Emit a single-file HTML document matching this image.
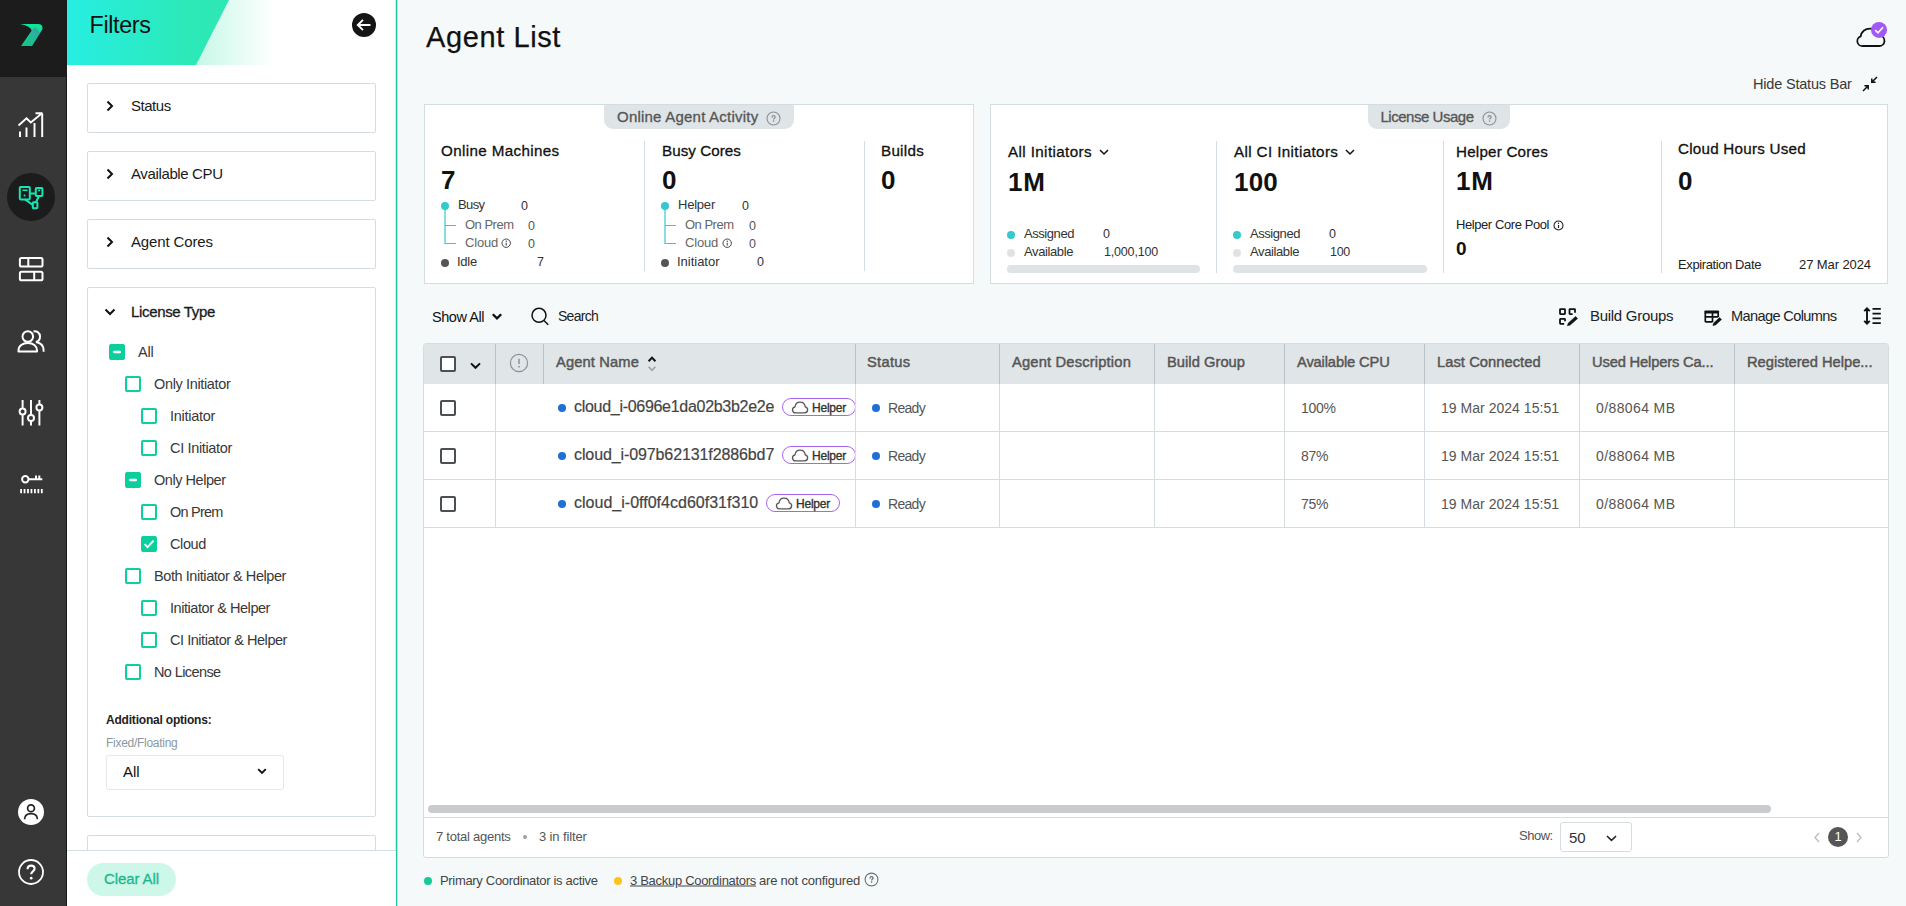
<!DOCTYPE html>
<html lang="en">
<head>
<meta charset="utf-8">
<title>Agent List</title>
<style>
*{box-sizing:border-box;margin:0;padding:0}
html,body{width:1906px;height:906px;overflow:hidden}
body{position:relative;background:#f5f9fa;font-family:"Liberation Sans",sans-serif;color:#1a1a1a;font-size:14px}
.abs,.t,.ico{position:absolute}
.t{white-space:nowrap;line-height:1;transform:translateY(-50%)}
.m{-webkit-text-stroke:0.3px currentColor}
.b{font-weight:bold}
.g{color:#555}
.g2{color:#666}
svg{display:block;overflow:visible}

/* sidebar */
#nav{position:absolute;left:0;top:0;width:67px;height:906px;background:#373737;box-shadow:inset -1px 0 0 #161616}
#nav .logo{position:absolute;left:0;top:0;width:67px;height:77px;background:#1c1c1c}
#nav .active{position:absolute;left:7px;top:173px;width:48px;height:48px;border-radius:50%;background:#1c1c1c}

/* filters */
#filters{position:absolute;left:67px;top:0;width:331px;height:906px;background:#fff;box-shadow:inset -1px 0 0 #b4ebdc, inset -2px 0 0 #1ec9a1, inset -3px 0 0 #c3f0e3}
#fhead{position:absolute;left:0;top:0;width:329px;height:65px;overflow:hidden}
.fbox{position:absolute;left:20px;width:289px;border:1px solid #d3dde2;border-radius:2px;background:#fff}
#ffoot{position:absolute;left:0;top:850px;width:329px;height:56px;background:#fff;border-top:1px solid #d3dde2}
#clear{position:absolute;left:20px;top:12px;width:89px;height:33px;border-radius:17px;background:#ccf7e9}
.cb{position:absolute;width:16px;height:16px;border:2px solid #0ccf9e;border-radius:2px;background:#fff}
.cb.on{background:#0ccf9e}
.sel{position:absolute;border:1px solid #e3e8eb;border-radius:3px;background:#fff}

/* main */
.card{position:absolute;top:104px;height:180px;background:#fff;border:1px solid #d3dce1}
.tab{position:absolute;top:0;height:24px;background:#dfe4e7;border-radius:0 0 9px 9px}
.vd{position:absolute;width:1px;background:#d3dce1}
.dot{position:absolute;width:8px;height:8px;border-radius:50%}
.bar{position:absolute;height:8px;border-radius:4px;background:#dfe3e6}
#tbl{position:absolute;left:423px;top:343px;width:1466px;height:515px;background:#fff;border:1px solid #d5dde1;border-radius:3px}
#thead{position:absolute;left:0;top:0;width:1464px;height:40px;background:#e0e5e8;border-radius:2px 2px 0 0}
.hl{position:absolute;top:0;width:1px;height:40px;background:#b9c2c7}
.cl{position:absolute;top:40px;width:1px;height:144px;background:#d5dde1}
.rl{position:absolute;left:0;width:1464px;height:1px;background:#d5dde1}
.ck{position:absolute;width:16px;height:16px;border:2px solid #4b5054;border-radius:2px;background:#fff}
.badge{position:absolute;height:18px;width:74px;border:1px solid #a764f0;border-radius:9px;background:#fff}
.bclip{position:absolute;height:20px;overflow:hidden}
</style>
</head>
<body>

<!-- ============ NAV ============ -->
<nav>
  <div id="nav"><div class="logo"></div><div class="active"></div></div>
  <!-- logo -->
  <svg class="ico" style="left:18px;top:22px" width="28" height="26" viewBox="18 22 28 26">
    <defs><linearGradient id="lg" x1="0" y1="0" x2="0" y2="1"><stop offset="0" stop-color="#0fe796"/><stop offset="1" stop-color="#17c08c"/></linearGradient>
    <linearGradient id="lg2" x1="0.7" y1="0" x2="0.2" y2="1"><stop offset="0" stop-color="#4a86b0"/><stop offset="1" stop-color="#1fb893" stop-opacity="0.2"/></linearGradient></defs>
    <path d="M20 24 L38.5 24 Q43.5 24.3 42.3 29.5 L32 46 L21 46 L31.8 30.5 Q30 25.5 20 24 Z" fill="url(#lg)"/>
    <path d="M31.8 30.5 L35.5 27 L40 33 L32 46 L25 46 Z" fill="url(#lg2)" opacity="0.75"/>
  </svg>
  <!-- chart -->
  <svg class="ico" style="left:17px;top:110px" width="28" height="28" viewBox="17 110 28 28" fill="none" stroke="#fff" stroke-width="1.95">
    <path d="M20 131.5V137M26.5 127.5V137M34.5 123V137M42.2 113.5V137"/>
    <path d="M18.5 125.5L26.5 118.3L30.8 122.5L42 113.2M35.5 113.2H42.5"/>
  </svg>
  <!-- agents (active) -->
  <svg class="ico" style="left:18px;top:185px" width="26" height="25" viewBox="18 185 26 25" fill="none" stroke="#14e6b4" stroke-width="2">
    <rect x="19.8" y="187" width="10" height="12.4" rx="0.8"/>
    <rect x="35.8" y="188" width="6.6" height="8" rx="0.8"/>
    <rect x="32.8" y="202.2" width="4.6" height="6" rx="0.8"/>
    <path d="M30 193.5H35.8M25 199.4L32.8 205M39 196L36 202.2"/>
    <path d="M22.5 190.3H27.5M38 190.5H40" stroke-width="1.4"/>
    <rect x="23.7" y="194.6" width="1.8" height="1.8" fill="#14e6b4" stroke="none"/>
  </svg>
  <!-- grid -->
  <svg class="ico" style="left:18px;top:256px" width="26" height="26" viewBox="18 256 26 26" fill="none" stroke="#fff" stroke-width="2">
    <rect x="19.9" y="257.9" width="22.6" height="8.6" rx="1.6"/><path d="M28.3 258V266.5"/>
    <rect x="19.9" y="271.7" width="22.6" height="8.6" rx="1.6"/><path d="M34.2 271.7V280.3"/>
  </svg>
  <!-- users -->
  <svg class="ico" style="left:16px;top:328px" width="30" height="26" viewBox="16 328 30 26" fill="none" stroke="#fff" stroke-width="2">
    <circle cx="27.8" cy="336.5" r="5.3"/>
    <path d="M18.5 351.5V350.5C18.5 346 22.5 343 27.8 343S37 346 37 350.5V351.5Z" stroke-linejoin="round"/>
    <path d="M33.5 331.4C37 330.8 40 333 40 336.5C40 339.5 38.2 341.5 36 342C40.5 342.8 43.6 346 43.6 350.5V351.8"/>
  </svg>
  <!-- sliders -->
  <svg class="ico" style="left:18px;top:399px" width="26" height="28" viewBox="18 399 26 28" fill="none" stroke="#fff" stroke-width="1.95">
    <path d="M22.6 400V408.5M22.6 414.5V425.5M31 400V415M31 421V425.5M39.4 400V404.5M39.4 410.5V425.5"/>
    <circle cx="22.6" cy="411.5" r="3"/><circle cx="31" cy="418" r="3"/><circle cx="39.4" cy="407.5" r="3"/>
  </svg>
  <!-- key -->
  <svg class="ico" style="left:19px;top:473px" width="25" height="22" viewBox="19 473 25 22" fill="none" stroke="#fff" stroke-width="2">
    <circle cx="25.3" cy="479.2" r="3.2"/><path d="M28.5 479.2H42.3M36 479.2V475.5M39.3 479.2V475.5"/>
    <path d="M20.2 491.2H42.8" stroke-width="4.2" stroke-dasharray="1.8 1.65"/>
  </svg>
  <!-- avatar -->
  <svg class="ico" style="left:18px;top:799px" width="26" height="26" viewBox="18 799 26 26">
    <circle cx="31" cy="812" r="13" fill="#fff"/>
    <circle cx="31" cy="808.2" r="3.4" fill="none" stroke="#222" stroke-width="1.7"/>
    <path d="M24.6 819.3C24.6 815.5 27.4 813.6 31 813.6S37.4 815.5 37.4 819.3" fill="none" stroke="#222" stroke-width="1.7"/>
  </svg>
  <!-- help -->
  <svg class="ico" style="left:18px;top:859px" width="26" height="26" viewBox="18 859 26 26" fill="none" stroke="#fff">
    <circle cx="31" cy="872" r="12" stroke-width="1.8"/>
    <path d="M27.6 869.2C27.6 866.8 29.2 865.6 31.1 865.6C33.1 865.6 34.6 866.8 34.6 868.7C34.6 871.3 31.2 871.3 31.2 874.3" stroke-width="2.1"/>
    <circle cx="31.2" cy="878.2" r="1.35" fill="#fff" stroke="none"/>
  </svg>
</nav>

<!-- ============ FILTERS ============ -->
<aside>
  <div id="filters">
    <div id="fhead">
      <svg width="329" height="65" viewBox="0 0 329 65">
        <defs>
          <linearGradient id="g1" x1="0" y1="0" x2="1" y2="0"><stop offset="0" stop-color="#27eee3"/><stop offset="0.72" stop-color="#2ce9b8"/><stop offset="1" stop-color="#2ee7b3"/></linearGradient>
          <linearGradient id="g2" x1="0" y1="0" x2="1" y2="0"><stop offset="0" stop-color="#c3f7e6"/><stop offset="1" stop-color="#ffffff"/></linearGradient>
        </defs>
        <rect x="125" y="0" width="82" height="65" fill="url(#g2)"/>
        <polygon points="0,0 162,0 129,65 0,65" fill="url(#g1)"/>
      </svg>
    </div>
    <div class="fbox" style="top:83px;height:50px"></div>
    <div class="fbox" style="top:151px;height:50px"></div>
    <div class="fbox" style="top:219px;height:50px"></div>
    <div class="fbox" style="top:287px;height:530px"></div>
    <div class="fbox" style="top:835px;height:50px"></div>
    <div id="ffoot"><div id="clear"></div></div>
  </div>
  <h2 class="t" style="left:89.5px;top:25.5px;font-size:23.3px;font-weight:normal;color:#111;--w:61;letter-spacing:-0.346px">Filters</h2>
  <svg class="ico" style="left:352px;top:13px" width="24" height="24" viewBox="0 0 24 24"><circle cx="12" cy="12" r="12" fill="#151515"/><path d="M18.5 12H6.2M11 6.8L5.8 12L11 17.2" fill="none" stroke="#fff" stroke-width="1.9"/></svg>
  <svg class="ico" style="left:106px;top:100px" width="8" height="12" viewBox="0 0 8 12" fill="none" stroke="#111" stroke-width="2"><path d="M1.5 1.5L6 6L1.5 10.5"/></svg>
  <span class="t" style="left:131px;top:105.1px;font-size:15px;--w:39.7;letter-spacing:-0.472px">Status</span>
  <svg class="ico" style="left:106px;top:168px" width="8" height="12" viewBox="0 0 8 12" fill="none" stroke="#111" stroke-width="2"><path d="M1.5 1.5L6 6L1.5 10.5"/></svg>
  <span class="t" style="left:131px;top:173.1px;font-size:15px;--w:91.7;letter-spacing:-0.366px">Available CPU</span>
  <svg class="ico" style="left:106px;top:236px" width="8" height="12" viewBox="0 0 8 12" fill="none" stroke="#111" stroke-width="2"><path d="M1.5 1.5L6 6L1.5 10.5"/></svg>
  <span class="t" style="left:131px;top:241.1px;font-size:15px;--w:81.8;letter-spacing:-0.145px">Agent Cores</span>
  <svg class="ico" style="left:104px;top:308px" width="12" height="8" viewBox="0 0 12 8" fill="none" stroke="#111" stroke-width="2"><path d="M1.5 1.5L6 6L10.5 1.5"/></svg>
  <span class="t m" style="left:131px;top:311.1px;font-size:15px;--w:84;letter-spacing:-0.344px">License Type</span>
  <span class="cb on" style="left:109px;top:344px"><svg width="12" height="12" viewBox="0 0 12 12"><path d="M3.2 6H8.8" stroke="#fff" stroke-width="2.5" stroke-linecap="round"/></svg></span>
  <span class="t" style="left:138px;top:352px;font-size:14.5px;color:#383838;--w:15.4;letter-spacing:-0.242px">All</span>
  <span class="cb" style="left:125px;top:376px"></span>
  <span class="t" style="left:154px;top:384px;font-size:14.5px;color:#383838;--w:76.4;letter-spacing:-0.358px">Only Initiator</span>
  <span class="cb" style="left:141px;top:408px"></span>
  <span class="t" style="left:170px;top:416px;font-size:14.5px;color:#383838;--w:45;letter-spacing:-0.285px">Initiator</span>
  <span class="cb" style="left:141px;top:440px"></span>
  <span class="t" style="left:170px;top:448px;font-size:14.5px;color:#383838;--w:62;letter-spacing:-0.341px">CI Initiator</span>
  <span class="cb on" style="left:125px;top:472px"><svg width="12" height="12" viewBox="0 0 12 12"><path d="M3.2 6H8.8" stroke="#fff" stroke-width="2.5" stroke-linecap="round"/></svg></span>
  <span class="t" style="left:154px;top:480px;font-size:14.5px;color:#383838;--w:71.5;letter-spacing:-0.460px">Only Helper</span>
  <span class="cb" style="left:141px;top:504px"></span>
  <span class="t" style="left:170px;top:512px;font-size:14.5px;color:#383838;--w:52.5;letter-spacing:-0.788px">On Prem</span>
  <span class="cb on" style="left:141px;top:536px"><svg width="12" height="12" viewBox="0 0 12 12"><path d="M1.6 6.2L4.6 9.2L10.6 2.6" stroke="#fff" stroke-width="1.9" fill="none"/></svg></span>
  <span class="t" style="left:170px;top:544px;font-size:14.5px;color:#383838;--w:36;letter-spacing:-0.378px">Cloud</span>
  <span class="cb" style="left:125px;top:568px"></span>
  <span class="t" style="left:154px;top:576px;font-size:14.5px;color:#383838;--w:132;letter-spacing:-0.429px">Both Initiator &amp; Helper</span>
  <span class="cb" style="left:141px;top:600px"></span>
  <span class="t" style="left:170px;top:608px;font-size:14.5px;color:#383838;--w:100;letter-spacing:-0.444px">Initiator &amp; Helper</span>
  <span class="cb" style="left:141px;top:632px"></span>
  <span class="t" style="left:170px;top:640px;font-size:14.5px;color:#383838;--w:117;letter-spacing:-0.454px">CI Initiator &amp; Helper</span>
  <span class="cb" style="left:125px;top:664px"></span>
  <span class="t" style="left:154px;top:672px;font-size:14.5px;color:#383838;--w:66.5;letter-spacing:-0.605px">No License</span>
  <span class="t b" style="left:106px;top:720px;font-size:12px;color:#222;--w:105.5;letter-spacing:-0.201px">Additional options:</span>
  <span class="t" style="left:106px;top:743px;font-size:12px;color:#8a9aa2;--w:71.5;letter-spacing:-0.277px">Fixed/Floating</span>
  <div class="sel" style="left:106px;top:755px;width:178px;height:35px"></div>
  <span class="t" style="left:123px;top:771px;font-size:15px;color:#111;--w:16.5;letter-spacing:-0.057px">All</span>
  <svg class="ico" style="left:257px;top:768px" width="10" height="7" viewBox="0 0 10 7" fill="none" stroke="#111" stroke-width="1.9"><path d="M1.2 1.2L5 5L8.8 1.2"/></svg>
  <span class="t m" style="left:104px;top:878.2px;font-size:15px;color:#1bb88f;--w:55;letter-spacing:-0.095px">Clear All</span>
</aside>

<!-- ============ MAIN ============ -->
<main>
<h1 class="t " style="left:426px;top:37px;font-size:29px;color:#111;font-weight:normal;-webkit-text-stroke:0.25px #111;--w:135;letter-spacing:0.602px">Agent List</h1>
<svg class="ico" style="left:1855px;top:20px" width="34" height="30" viewBox="1855 20 34 30"><path d="M1862.9 46H1879.3A5.2 5.2 0 0 0 1880.3 35.7C1879.5 31.5 1875 28.6 1870 28.6C1865 28.6 1861.3 31.8 1860.7 36.3A5 5 0 0 0 1862.9 46Z" fill="none" stroke="#111" stroke-width="1.8" stroke-linejoin="round"/><circle cx="1879" cy="29.9" r="8" fill="#a259f7"/><path d="M1875.2 30.1L1878 32.8L1883 27.2" fill="none" stroke="#fff" stroke-width="1.6"/></svg>
<span class="t " style="left:1753px;top:84px;font-size:14.5px;color:#383838;--w:98.7;letter-spacing:-0.191px">Hide Status Bar</span>
<svg class="ico" style="left:1862px;top:76px" width="16" height="16" viewBox="0 0 16 16" fill="none" stroke="#111" stroke-width="1.5"><path d="M15 1L9.8 6.2M9.8 2.4V6.2H13.6M1 15L6.2 9.8M6.2 13.6V9.8H2.4"/></svg>
<section><div class="card" style="left:424px;width:550px"><div class="tab" style="left:179px;width:190px"></div><div class="vd" style="left:219px;top:36px;height:130px"></div><div class="vd" style="left:439px;top:36px;height:130px"></div></div>
<span class="t m" style="left:617px;top:116.2px;font-size:15px;color:#555;--w:141.4;letter-spacing:0.221px">Online Agent Activity</span>
<svg class="ico" style="left:765.5px;top:110.5px" width="15.0" height="15.0" viewBox="-7.5 -7.5 15.0 15.0" fill="none" stroke="#8a9197" stroke-width="1.1"><circle r="6.5"/><path d="M-1.5 -1.1C-1.5 -2.2 -0.8 -2.8 0.1 -2.8S1.6 -2.2 1.6 -1.4C1.6 -0.2 0.1 -0.3 0.1 0.9" stroke-width="1.3"/><circle cx="0.1" cy="2.6" r="0.8" fill="#8a9197" stroke="none"/></svg>
<span class="t m" style="left:441px;top:151px;font-size:15.2px;color:#111;--w:118.5;letter-spacing:0.358px">Online Machines</span>
<span class="t b" style="left:441px;top:179.7px;font-size:26px;color:#111;--w:13.5;letter-spacing:-0.969px">7</span>
<svg class="ico" style="left:440px;top:201px" width="16" height="48" viewBox="440 201 16 48" fill="none" stroke="#35c8cc" stroke-width="1.2"><circle cx="445" cy="206" r="4" fill="#35c8cc" stroke="none"/><path d="M445 206V243.5H456M445 225.5H456"/></svg>
<span class="dot" style="left:441px;top:259px;background:#555"></span>
<span class="t " style="left:458px;top:204.3px;font-size:13px;color:#333;--w:26.5;letter-spacing:-0.602px">Busy</span>
<span class="t " style="left:521px;top:206px;font-size:12.5px;color:#333;--w:7;letter-spacing:0.047px">0</span>
<span class="t " style="left:465px;top:224.3px;font-size:13px;color:#666;--w:48.5;letter-spacing:-0.502px">On Prem</span>
<span class="t " style="left:528px;top:226px;font-size:12.5px;color:#555;--w:7;letter-spacing:0.047px">0</span>
<span class="t " style="left:465px;top:242.3px;font-size:13px;color:#666;--w:33;letter-spacing:-0.194px">Cloud</span>
<svg class="ico" style="left:500.8px;top:238.3px" width="10.4" height="10.4" viewBox="-5.2 -5.2 10.4 10.4" fill="none" stroke="#444" stroke-width="1.0"><circle r="4.2"/><path d="M0 -0.5V2.3" stroke-width="1.1"/><circle cy="-2.0" r="0.7" fill="#444" stroke="none"/></svg>
<span class="t " style="left:528px;top:244px;font-size:12.5px;color:#555;--w:7;letter-spacing:0.047px">0</span>
<span class="t " style="left:457px;top:261.3px;font-size:13px;color:#333;--w:20;letter-spacing:-0.242px">Idle</span>
<span class="t " style="left:537px;top:262px;font-size:12.5px;color:#333;--w:6.5;letter-spacing:-0.453px">7</span>
<span class="t m" style="left:662px;top:151px;font-size:15.2px;color:#111;--w:79;letter-spacing:0.050px">Busy Cores</span>
<span class="t b" style="left:662px;top:179.7px;font-size:26px;color:#111;--w:14;letter-spacing:-0.469px">0</span>
<svg class="ico" style="left:660px;top:201px" width="16" height="48" viewBox="660 201 16 48" fill="none" stroke="#35c8cc" stroke-width="1.2"><circle cx="665" cy="206" r="4" fill="#35c8cc" stroke="none"/><path d="M665 206V243.5H676M665 225.5H676"/></svg>
<span class="dot" style="left:661px;top:259px;background:#555"></span>
<span class="t " style="left:678px;top:204.3px;font-size:13px;color:#333;--w:37;letter-spacing:-0.216px">Helper</span>
<span class="t " style="left:742px;top:206px;font-size:12.5px;color:#333;--w:7;letter-spacing:0.047px">0</span>
<span class="t " style="left:685px;top:224.3px;font-size:13px;color:#666;--w:48.5;letter-spacing:-0.502px">On Prem</span>
<span class="t " style="left:749px;top:226px;font-size:12.5px;color:#555;--w:7;letter-spacing:0.047px">0</span>
<span class="t " style="left:685px;top:242.3px;font-size:13px;color:#666;--w:33;letter-spacing:-0.194px">Cloud</span>
<svg class="ico" style="left:721.8px;top:238.3px" width="10.4" height="10.4" viewBox="-5.2 -5.2 10.4 10.4" fill="none" stroke="#444" stroke-width="1.0"><circle r="4.2"/><path d="M0 -0.5V2.3" stroke-width="1.1"/><circle cy="-2.0" r="0.7" fill="#444" stroke="none"/></svg>
<span class="t " style="left:749px;top:244px;font-size:12.5px;color:#555;--w:7;letter-spacing:0.047px">0</span>
<span class="t " style="left:677px;top:261.3px;font-size:13px;color:#333;--w:42.5;letter-spacing:-0.016px">Initiator</span>
<span class="t " style="left:757px;top:262px;font-size:12.5px;color:#333;--w:7;letter-spacing:0.047px">0</span>
<span class="t m" style="left:881px;top:151px;font-size:15.2px;color:#111;--w:43;letter-spacing:0.271px">Builds</span>
<span class="t b" style="left:881px;top:179.7px;font-size:26px;color:#111;--w:14;letter-spacing:-0.469px">0</span>
</section>
<section><div class="card" style="left:990px;width:898px"><div class="tab" style="left:377px;width:142px"></div><div class="vd" style="left:225px;top:36px;height:132px"></div><div class="vd" style="left:452px;top:36px;height:132px"></div><div class="vd" style="left:670px;top:36px;height:132px"></div></div>
<span class="t m" style="left:1380.5px;top:116.2px;font-size:15px;color:#555;--w:93;letter-spacing:-0.480px">License Usage</span>
<svg class="ico" style="left:1481.5px;top:110.5px" width="15.0" height="15.0" viewBox="-7.5 -7.5 15.0 15.0" fill="none" stroke="#8a9197" stroke-width="1.1"><circle r="6.5"/><path d="M-1.5 -1.1C-1.5 -2.2 -0.8 -2.8 0.1 -2.8S1.6 -2.2 1.6 -1.4C1.6 -0.2 0.1 -0.3 0.1 0.9" stroke-width="1.3"/><circle cx="0.1" cy="2.6" r="0.8" fill="#8a9197" stroke="none"/></svg>
<span class="t m" style="left:1008px;top:152px;font-size:15.2px;color:#111;--w:84;letter-spacing:0.393px">All Initiators</span>
<svg class="ico" style="left:1099px;top:149px" width="10" height="7" viewBox="0 0 10 7" fill="none" stroke="#111" stroke-width="1.5"><path d="M1 1L5 5L9 1"/></svg>
<span class="t b" style="left:1008px;top:181.7px;font-size:26px;color:#111;--w:37.5;letter-spacing:0.688px">1M</span>
<span class="dot" style="left:1007px;top:231px;background:#35c8cc"></span>
<span class="dot" style="left:1007px;top:249px;background:#dfe3e6"></span>
<span class="t " style="left:1024px;top:233.2px;font-size:13px;color:#333;--w:50;letter-spacing:-0.436px">Assigned</span>
<span class="t " style="left:1103px;top:234px;font-size:12.5px;color:#333;--w:7;letter-spacing:0.047px">0</span>
<span class="t " style="left:1024px;top:251.2px;font-size:13px;color:#333;--w:49;letter-spacing:-0.392px">Available</span>
<span class="t " style="left:1104px;top:252px;font-size:12.5px;color:#333;--w:54;letter-spacing:-0.179px">1,000,100</span>
<span class="bar" style="left:1007px;top:265px;width:193px"></span>
<span class="t m" style="left:1234px;top:152px;font-size:15.2px;color:#111;--w:104.3;letter-spacing:0.376px">All CI Initiators</span>
<svg class="ico" style="left:1345px;top:149px" width="10" height="7" viewBox="0 0 10 7" fill="none" stroke="#111" stroke-width="1.5"><path d="M1 1L5 5L9 1"/></svg>
<span class="t b" style="left:1234px;top:181.7px;font-size:26px;color:#111;--w:44;letter-spacing:0.203px">100</span>
<span class="dot" style="left:1233px;top:231px;background:#35c8cc"></span>
<span class="dot" style="left:1233px;top:249px;background:#dfe3e6"></span>
<span class="t " style="left:1250px;top:233.2px;font-size:13px;color:#333;--w:50;letter-spacing:-0.436px">Assigned</span>
<span class="t " style="left:1329px;top:234px;font-size:12.5px;color:#333;--w:7;letter-spacing:0.047px">0</span>
<span class="t " style="left:1250px;top:251.2px;font-size:13px;color:#333;--w:49;letter-spacing:-0.392px">Available</span>
<span class="t " style="left:1330px;top:252px;font-size:12.5px;color:#333;--w:20;letter-spacing:-0.286px">100</span>
<span class="bar" style="left:1233px;top:265px;width:194px"></span>
<span class="t m" style="left:1456px;top:152px;font-size:15.2px;color:#111;--w:92;letter-spacing:0.210px">Helper Cores</span>
<span class="t b" style="left:1456px;top:180.7px;font-size:26px;color:#111;--w:37.5;letter-spacing:0.688px">1M</span>
<span class="t " style="left:1456px;top:224.2px;font-size:13px;color:#222;--w:93;letter-spacing:-0.420px">Helper Core Pool</span>
<svg class="ico" style="left:1553.3px;top:220.1px" width="11" height="11" viewBox="-5.5 -5.5 11 11" fill="none" stroke="#222" stroke-width="1.1"><circle r="4.5"/><path d="M0 -0.5V2.5" stroke-width="1.2"/><circle cy="-2.2" r="0.7" fill="#222" stroke="none"/></svg>
<span class="t b" style="left:1456px;top:248.4px;font-size:19px;color:#111;--w:10.5;letter-spacing:-0.078px">0</span>
<span class="t m" style="left:1678px;top:149px;font-size:15.2px;color:#111;--w:128;letter-spacing:0.244px">Cloud Hours Used</span>
<span class="t b" style="left:1678px;top:180.7px;font-size:26px;color:#111;--w:14;letter-spacing:-0.469px">0</span>
<span class="t " style="left:1678px;top:264.2px;font-size:13px;color:#222;--w:83;letter-spacing:-0.393px">Expiration Date</span>
<span class="t " style="left:1799px;top:264.2px;font-size:13px;color:#222;--w:72;letter-spacing:-0.091px">27 Mar 2024</span>
</section>
<section>
<span class="t " style="left:432px;top:316.8px;font-size:14.5px;color:#111;--w:52;letter-spacing:-0.453px">Show All</span>
<svg class="ico" style="left:492px;top:313px" width="10" height="7" viewBox="0 0 10 7" fill="none" stroke="#111" stroke-width="2.3"><path d="M0.8 1.2L5 5.4L9.2 1.2"/></svg>
<svg class="ico" style="left:530px;top:305.5px" width="20" height="20" viewBox="0 0 20 20" fill="none" stroke="#111" stroke-width="1.5"><circle cx="9" cy="9.3" r="7"/><path d="M14 14.5L18.2 18.8"/></svg>
<span class="t " style="left:558px;top:316px;font-size:14px;color:#222;--w:40;letter-spacing:-0.727px">Search</span>
<svg class="ico" style="left:1558px;top:307px" width="21" height="20" viewBox="0 0 21 20" fill="none" stroke="#111" stroke-width="1.8"><rect x="2" y="2.1" width="5" height="5" rx="0.5"/><path d="M17 5.8V2.6A0.5 0.5 0 0 0 16.5 2.1H12A0.5 0.5 0 0 0 11.5 2.6V6.6A0.5 0.5 0 0 0 12 7.1H14.6"/><path d="M7 14.2V12.4A0.5 0.5 0 0 0 6.5 11.9H2.5A0.5 0.5 0 0 0 2 12.4V16.3A0.5 0.5 0 0 0 2.5 16.8H6.2"/><path d="M9.4 18.8L10.3 16L17.6 9.4L19.6 11.6L12.2 18.1Z" fill="#111" stroke-width="0.5"/></svg>
<span class="t " style="left:1590px;top:315px;font-size:15px;color:#222;--w:83.3;letter-spacing:-0.285px">Build Groups</span>
<svg class="ico" style="left:1703px;top:309px" width="19" height="18" viewBox="0 0 19 18" fill="none" stroke="#111" stroke-width="1.7"><rect x="1.45" y="1.4" width="14.6" height="3" rx="0.9" fill="#111" stroke="none"/><path d="M2.3 3.5V12.3A0.6 0.6 0 0 0 2.9 12.9H9.6M15.2 3.5V8M2.3 7.9H15.2M9.5 4V12.9"/><path d="M9.9 16.6L10.7 13.9L16.6 8.6L18.5 10.6L12.6 15.9Z" fill="#111" stroke-width="0.5"/></svg>
<span class="t " style="left:1731px;top:316.3px;font-size:14.6px;color:#222;--w:105.4;letter-spacing:-0.642px">Manage Columns</span>
<svg class="ico" style="left:1863px;top:306px" width="19" height="20" viewBox="0 0 19 20" fill="none" stroke="#111" stroke-width="1.9"><path d="M4 2.6V17.4M1.2 5.2L4 2.4L6.8 5.2M1.2 14.8L4 17.6L6.8 14.8M9.5 2.9H17.8M9.5 7.6H17.8M9.5 12.4H17.8M9.5 17.1H17.8"/></svg>
</section>
<section><div id="tbl"><div id="thead"></div>
<i class="hl" style="left:71px"></i>
<i class="cl" style="left:71px"></i>
<i class="hl" style="left:119px"></i>
<i class="hl" style="left:431px"></i>
<i class="cl" style="left:431px"></i>
<i class="hl" style="left:575px"></i>
<i class="cl" style="left:575px"></i>
<i class="hl" style="left:730px"></i>
<i class="cl" style="left:730px"></i>
<i class="hl" style="left:860px"></i>
<i class="cl" style="left:860px"></i>
<i class="hl" style="left:1000px"></i>
<i class="cl" style="left:1000px"></i>
<i class="hl" style="left:1155px"></i>
<i class="cl" style="left:1155px"></i>
<i class="hl" style="left:1310px"></i>
<i class="cl" style="left:1310px"></i>
<i class="rl" style="top:87px"></i>
<i class="rl" style="top:135px"></i>
<i class="rl" style="top:183px"></i>
<i class="rl" style="top:473px"></i>
<i style="position:absolute;left:4px;top:461px;width:1343px;height:8px;border-radius:4px;background:#c8cccf"></i>
<div class="sel" style="left:1136px;top:478px;width:72px;height:30px;border-color:#d5dde1"></div>
</div>
<span class="ck" style="left:440px;top:356px"></span>
<svg class="ico" style="left:470px;top:362px" width="11" height="8" viewBox="0 0 11 8" fill="none" stroke="#111" stroke-width="2"><path d="M1 1.4L5.5 5.8L10 1.4"/></svg>
<svg class="ico" style="left:508.5px;top:353px" width="20" height="20" viewBox="-10 -10 20 20" fill="none" stroke="#8a9299" stroke-width="1.2"><circle r="8.6"/><path d="M0 -4.2V1" stroke-width="1.5"/><circle cy="3.7" r="0.9" fill="#8a9299" stroke="none"/></svg>
<span class="t" style="left:556px;top:361.6px;font-size:14.7px;color:#555;-webkit-text-stroke:0.45px #555;--w:83;letter-spacing:0.134px">Agent Name</span>
<span class="t" style="left:867px;top:361.6px;font-size:14.7px;color:#555;-webkit-text-stroke:0.45px #555;--w:43.5;letter-spacing:0.310px">Status</span>
<span class="t" style="left:1012px;top:361.6px;font-size:14.7px;color:#555;-webkit-text-stroke:0.45px #555;--w:119;letter-spacing:0.180px">Agent Description</span>
<span class="t" style="left:1167px;top:361.6px;font-size:14.7px;color:#555;-webkit-text-stroke:0.45px #555;--w:78;letter-spacing:0.040px">Build Group</span>
<span class="t" style="left:1297px;top:361.6px;font-size:14.7px;color:#555;-webkit-text-stroke:0.45px #555;--w:92.6;letter-spacing:-0.141px">Available CPU</span>
<span class="t" style="left:1437px;top:361.6px;font-size:14.7px;color:#555;-webkit-text-stroke:0.45px #555;--w:103.7;letter-spacing:0.058px">Last Connected</span>
<span class="t" style="left:1592px;top:361.6px;font-size:14.7px;color:#555;-webkit-text-stroke:0.45px #555;--w:121.4;letter-spacing:-0.149px">Used Helpers Ca...</span>
<span class="t" style="left:1747px;top:361.6px;font-size:14.7px;color:#555;-webkit-text-stroke:0.45px #555;--w:125.5;letter-spacing:-0.012px">Registered Helpe...</span>
<svg class="ico" style="left:647px;top:356px" width="10" height="16" viewBox="0 0 10 16" fill="none" stroke-width="1.6"><path d="M1.6 5.2L5 1.6L8.4 5.2" stroke="#111" stroke-width="2"/><path d="M1.6 10.8L5 14.4L8.4 10.8" stroke="#9aa2a8"/></svg>
<span class="ck" style="left:440px;top:400px"></span>
<span class="dot" style="left:558px;top:404px;background:#1f6fd6"></span>
<span class="t" style="left:574px;top:407.2px;font-size:16px;color:#444;-webkit-text-stroke:0.2px #444;--w:200;letter-spacing:-0.292px">cloud_i-0696e1da02b3b2e2e</span>
<span class="bclip" style="left:782px;top:398px;width:73px"><span class="badge" style="left:0;top:0"><svg style="position:absolute;left:8.7px;top:1.6px" width="17" height="13" viewBox="0 0 17 13" fill="none" stroke="#555" stroke-width="1.3"><path d="M4.1 11.9H12.6A3.1 3.1 0 0 0 13.3 5.8C12.8 3 10.6 1.2 8 1.2C5.4 1.2 3.4 3.1 3 5.8A3.1 3.1 0 0 0 4.1 11.9Z"/></svg></span></span>
<span class="t " style="left:812px;top:407.5px;font-size:12px;color:#333;-webkit-text-stroke:0.35px;--w:34;letter-spacing:-0.227px">Helper</span>
<span class="dot" style="left:872px;top:404px;background:#1f6fd6"></span>
<span class="t " style="left:888px;top:408px;font-size:14px;color:#555;--w:37;letter-spacing:-0.694px">Ready</span>
<span class="t " style="left:1301px;top:408px;font-size:14px;color:#555;--w:34.8;letter-spacing:-0.253px">100%</span>
<span class="t " style="left:1441px;top:408px;font-size:14px;color:#555;--w:118;letter-spacing:0.028px">19 Mar 2024 15:51</span>
<span class="t " style="left:1596px;top:408px;font-size:14px;color:#555;--w:79.4;letter-spacing:0.390px">0/88064 MB</span>
<span class="ck" style="left:440px;top:448px"></span>
<span class="dot" style="left:558px;top:452px;background:#1f6fd6"></span>
<span class="t" style="left:574px;top:455.2px;font-size:16px;color:#444;-webkit-text-stroke:0.2px #444;--w:200.2;letter-spacing:-0.106px">cloud_i-097b62131f2886bd7</span>
<span class="bclip" style="left:782px;top:446px;width:73px"><span class="badge" style="left:0;top:0"><svg style="position:absolute;left:8.7px;top:1.6px" width="17" height="13" viewBox="0 0 17 13" fill="none" stroke="#555" stroke-width="1.3"><path d="M4.1 11.9H12.6A3.1 3.1 0 0 0 13.3 5.8C12.8 3 10.6 1.2 8 1.2C5.4 1.2 3.4 3.1 3 5.8A3.1 3.1 0 0 0 4.1 11.9Z"/></svg></span></span>
<span class="t " style="left:812px;top:455.5px;font-size:12px;color:#333;-webkit-text-stroke:0.35px;--w:34;letter-spacing:-0.227px">Helper</span>
<span class="dot" style="left:872px;top:452px;background:#1f6fd6"></span>
<span class="t " style="left:888px;top:456px;font-size:14px;color:#555;--w:37;letter-spacing:-0.694px">Ready</span>
<span class="t " style="left:1301px;top:456px;font-size:14px;color:#555;--w:27;letter-spacing:-0.344px">87%</span>
<span class="t " style="left:1441px;top:456px;font-size:14px;color:#555;--w:118;letter-spacing:0.028px">19 Mar 2024 15:51</span>
<span class="t " style="left:1596px;top:456px;font-size:14px;color:#555;--w:79.4;letter-spacing:0.390px">0/88064 MB</span>
<span class="ck" style="left:440px;top:496px"></span>
<span class="dot" style="left:558px;top:500px;background:#1f6fd6"></span>
<span class="t" style="left:574px;top:503.2px;font-size:16px;color:#444;-webkit-text-stroke:0.2px #444;--w:184.2;letter-spacing:0.014px">cloud_i-0ff0f4cd60f31f310</span>
<span class="bclip" style="left:766px;top:494px;width:76px"><span class="badge" style="left:0;top:0"><svg style="position:absolute;left:8.7px;top:1.6px" width="17" height="13" viewBox="0 0 17 13" fill="none" stroke="#555" stroke-width="1.3"><path d="M4.1 11.9H12.6A3.1 3.1 0 0 0 13.3 5.8C12.8 3 10.6 1.2 8 1.2C5.4 1.2 3.4 3.1 3 5.8A3.1 3.1 0 0 0 4.1 11.9Z"/></svg></span></span>
<span class="t " style="left:796px;top:503.5px;font-size:12px;color:#333;-webkit-text-stroke:0.35px;--w:34;letter-spacing:-0.227px">Helper</span>
<span class="dot" style="left:872px;top:500px;background:#1f6fd6"></span>
<span class="t " style="left:888px;top:504px;font-size:14px;color:#555;--w:37;letter-spacing:-0.694px">Ready</span>
<span class="t " style="left:1301px;top:504px;font-size:14px;color:#555;--w:27;letter-spacing:-0.344px">75%</span>
<span class="t " style="left:1441px;top:504px;font-size:14px;color:#555;--w:118;letter-spacing:0.028px">19 Mar 2024 15:51</span>
<span class="t " style="left:1596px;top:504px;font-size:14px;color:#555;--w:79.4;letter-spacing:0.390px">0/88064 MB</span>
<span class="t " style="left:436px;top:836.3px;font-size:13px;color:#555;--w:74.5;letter-spacing:-0.254px">7 total agents</span>
<span class="dot" style="left:523px;top:835px;width:4px;height:4px;background:#9aa2a8"></span>
<span class="t " style="left:539px;top:836.3px;font-size:13px;color:#555;--w:47.8;letter-spacing:-0.122px">3 in filter</span>
<span class="t " style="left:1519px;top:835.3px;font-size:13px;color:#555;--w:33.7;letter-spacing:-0.488px">Show:</span>
<span class="t " style="left:1569px;top:836.8px;font-size:15px;color:#333;--w:16.5;letter-spacing:-0.094px">50</span>
<svg class="ico" style="left:1606px;top:835px" width="11" height="7" viewBox="0 0 11 7" fill="none" stroke="#222" stroke-width="1.5"><path d="M1 1L5.5 5.4L10 1"/></svg>
<svg class="ico" style="left:1814px;top:832px" width="6" height="11" viewBox="0 0 6 11" fill="none" stroke="#b5bcc1" stroke-width="1.3"><path d="M5 1L1 5.5L5 10"/></svg>
<span class="abs" style="left:1828px;top:827px;width:20px;height:20px;border-radius:50%;background:#555"></span>
<span class="t" style="left:1834.5px;top:835.5px;font-size:13px;color:#fff;--w:7;letter-spacing:-0.234px">1</span>
<svg class="ico" style="left:1856px;top:832px" width="6" height="11" viewBox="0 0 6 11" fill="none" stroke="#b5bcc1" stroke-width="1.3"><path d="M1 1L5 5.5L1 10"/></svg>
</section>
<footer>
<span class="dot" style="left:424px;top:877px;background:#14c99b"></span>
<span class="t " style="left:440px;top:880.3px;font-size:13px;color:#444;--w:157.6;letter-spacing:-0.320px">Primary Coordinator is active</span>
<span class="dot" style="left:614px;top:877px;background:#fdc31c"></span>
<span class="t " style="left:630px;top:880.3px;font-size:13px;color:#444;text-decoration:underline;--w:126;letter-spacing:-0.298px">3 Backup Coordinators</span>
<span class="t " style="left:759px;top:880.3px;font-size:13px;color:#444;--w:101;letter-spacing:-0.211px">are not configured</span>
<svg class="ico" style="left:863.5px;top:872.2px" width="15" height="15" viewBox="-7.5 -7.5 15 15" fill="none" stroke="#6a7278" stroke-width="1.1"><circle r="6.4"/><path d="M-1.5 -1.1C-1.5 -2.2 -0.8 -2.8 0.1 -2.8S1.6 -2.2 1.6 -1.4C1.6 -0.2 0.1 -0.3 0.1 0.9" stroke-width="1.3"/><circle cx="0.1" cy="2.6" r="0.8" fill="#6a7278" stroke="none"/></svg>
</footer>
</main>

</body>
</html>
